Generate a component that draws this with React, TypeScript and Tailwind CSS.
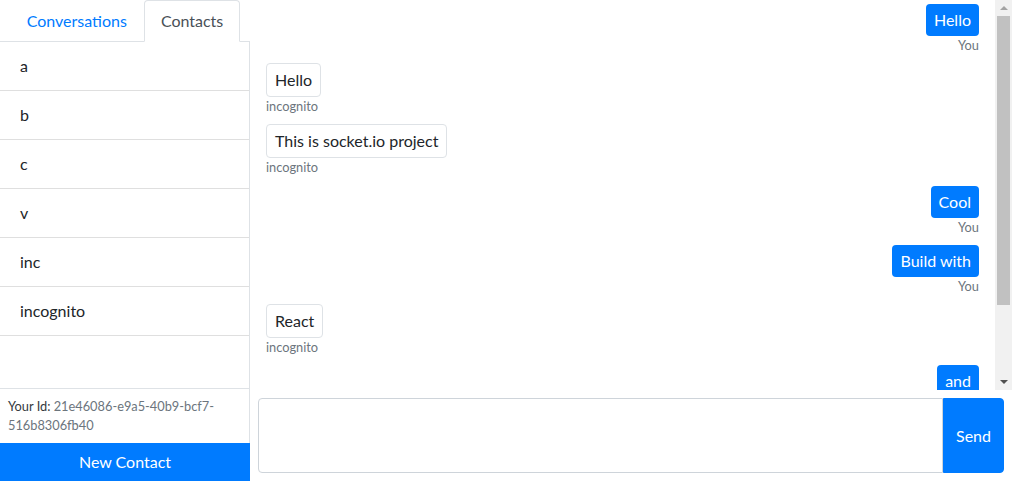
import React from "react";

type Message = { text: string; fromMe: boolean; sender: string };

const messages: Message[] = [
  { text: "Hello", fromMe: true, sender: "You" },
  { text: "Hello", fromMe: false, sender: "incognito" },
  { text: "This is socket.io project", fromMe: false, sender: "incognito" },
  { text: "Cool", fromMe: true, sender: "You" },
  { text: "Build with", fromMe: true, sender: "You" },
  { text: "React", fromMe: false, sender: "incognito" },
  { text: "and", fromMe: true, sender: "You" },
  { text: "Bootstrap", fromMe: true, sender: "You" },
];

const contacts = ["a", "b", "c", "v", "inc", "incognito"];

const Sidebar: React.FC = () => {
  return (
    <div className="flex flex-col w-[250px] h-full shrink-0">
      <div className="flex justify-center border-b border-[#dee2e6] h-[42px]">
        <div className="px-4 py-2 mb-[-1px] border border-transparent text-[#007bff] cursor-pointer">
          Conversations
        </div>
        <div className="px-4 py-2 mb-[-1px] border border-[#dee2e6] border-b-white bg-white rounded-t text-[#495057]">
          Contacts
        </div>
      </div>
      <div className="flex-1 overflow-auto border-r border-[#dee2e6]">
        {contacts.map((c) => (
          <div key={c} className="px-5 py-3 border-b border-[rgba(0,0,0,0.125)] text-[#212529]">
            {c}
          </div>
        ))}
      </div>
      <div className="p-2 border-t border-r border-[#dee2e6] text-[12.8px] leading-[1.5] text-[#343a40]">
        Your Id: <span className="text-[#6c757d]">21e46086-e9a5-40b9-bcf7-516b8306fb40</span>
      </div>
      <button className="bg-[#007bff] text-white h-[38px] w-full">New Contact</button>
    </div>
  );
};

// classic scrollbar look (the headless page hides native ones)
const ScrollBar: React.FC = () => (
  <div className="w-[17px] shrink-0 h-full bg-[#f1f1f1] flex flex-col">
    <div className="h-4 flex items-center justify-center">
      <div className="w-0 h-0 border-x-[4px] border-x-transparent border-b-[4px] border-b-[#a3a3a3]" />
    </div>
    <div className="flex-1 px-[2px]">
      <div className="h-[289px] bg-[#c1c1c1]" />
    </div>
    <div className="h-4 flex items-center justify-center">
      <div className="w-0 h-0 border-x-[4px] border-x-transparent border-t-[4px] border-t-[#505050]" />
    </div>
  </div>
);

const Chat: React.FC = () => {
  return (
    <div className="flex flex-col flex-1 h-full min-w-0">
      <div className="flex flex-1 min-h-0">
        <div className="flex-1 min-w-0 h-full overflow-hidden">
          <div className="flex flex-col items-start px-4">
            {messages.map((m, i) => (
              <div
                key={i}
                className={`my-1 flex flex-col ${m.fromMe ? "self-end items-end" : "items-start"}`}
              >
                <div
                  className={`rounded px-2 py-1 ${
                    m.fromMe ? "bg-[#007bff] text-white" : "border border-[#dee2e6] text-[#212529]"
                  }`}
                >
                  {m.text}
                </div>
                <div className={`text-[12.8px] leading-[1.5] text-[#6c757d] ${m.fromMe ? "text-right" : ""}`}>
                  {m.sender}
                </div>
              </div>
            ))}
          </div>
        </div>
        <ScrollBar />
      </div>
      <form className="m-2 flex" onSubmit={(e) => e.preventDefault()}>
        <textarea className="flex-1 h-[75px] resize-none border border-[#ced4da] rounded-l px-3 py-1.5 outline-none" />
        <button type="submit" className="bg-[#007bff] text-white px-3 rounded-r border border-[#007bff]">
          Send
        </button>
      </form>
    </div>
  );
};

export default function App() {
  return (
    <div className="flex h-screen bg-white text-base leading-[1.5] text-[#212529] font-['Lato','Noto_Sans',sans-serif]">
      <Sidebar />
      <Chat />
    </div>
  );
}
